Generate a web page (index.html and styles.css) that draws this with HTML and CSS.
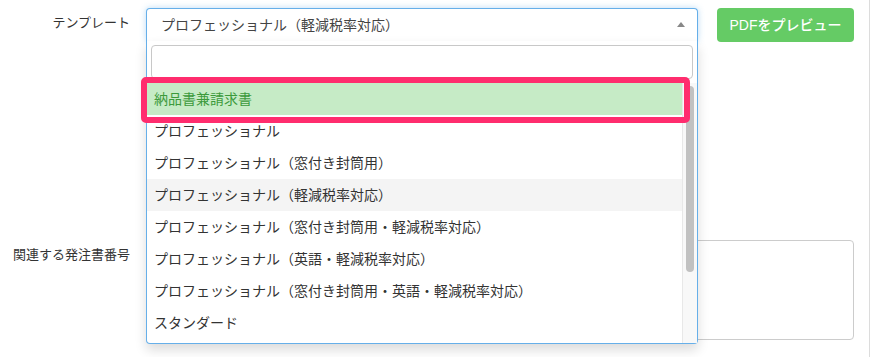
FILE: index.html
```html
<!DOCTYPE html>
<html lang="ja">
<head>
<meta charset="utf-8">
<title>テンプレート</title>
<link rel="stylesheet" href="styles.css">
</head>
<body>
<div class="page">
  <form class="form">
    <div class="row">
      <label class="label">テンプレート</label>
      <div class="field">
        <div class="select-wrap">
          <div class="select">
            <span class="select-text">プロフェッショナル（軽減税率対応）</span>
            <span class="arrow"></span>
          </div>
          <div class="dropdown">
            <div class="search"><input class="search-input" type="text"></div>
            <div class="results">
              <ul class="options">
                <li class="option selected">納品書兼請求書</li>
                <li class="option">プロフェッショナル</li>
                <li class="option">プロフェッショナル（窓付き封筒用）</li>
                <li class="option hover">プロフェッショナル（軽減税率対応）</li>
                <li class="option">プロフェッショナル（窓付き封筒用・軽減税率対応）</li>
                <li class="option">プロフェッショナル（英語・軽減税率対応）</li>
                <li class="option">プロフェッショナル（窓付き封筒用・英語・軽減税率対応）</li>
                <li class="option">スタンダード</li>
              </ul>
              <div class="scrollbar"><div class="thumb"></div></div>
            </div>
            <div class="callout"></div>
          </div>
        </div>
        <button class="btn" type="button">PDFをプレビュー</button>
      </div>
    </div>
    <div class="row row-po">
      <label class="label">関連する発注書番号</label>
      <div class="field">
        <textarea class="textarea"></textarea>
      </div>
    </div>
  </form>
</div>
</body>
</html>
```
FILE: styles.css
```css
html, body {
  margin: 0;
  padding: 0;
  background: #fff;
}

body {
  font-family: "Liberation Sans", "Noto Sans CJK JP", sans-serif;
  color: #333;
}

.page {
  width: 870px;
  height: 357px;
  box-sizing: border-box;
  padding-top: 8px;
  border-right: 1px solid #dcdcdc;
  overflow: hidden;
}

.form {
  margin: 0;
}

.row {
  display: grid;
  grid-template-columns: 130px 708px;
  column-gap: 16px;
  align-items: start;
}

.row-po {
  margin-top: 198px;
}

.label {
  text-align: right;
  font-size: 13px;
  line-height: 20px;
  padding-top: 5px;
  color: #333;
  white-space: nowrap;
}

.field {
  display: flex;
  align-items: flex-start;
  gap: 19px;
}

.select-wrap {
  position: relative;
  width: 552px;
  flex: none;
}

.select {
  height: 33px;
  box-sizing: border-box;
  border: 1px solid #66afe9;
  border-bottom: none;
  border-radius: 4px 4px 0 0;
  display: flex;
  align-items: center;
  justify-content: space-between;
  padding: 0 12px 0 14px;
  font-size: 14px;
  color: #444;
  box-shadow: 0 0 6px rgba(102, 175, 233, 0.45);
  background: #fff;
}

.select-text {
  line-height: 20px;
  white-space: nowrap;
}

.arrow {
  width: 0;
  height: 0;
  border-style: solid;
  border-width: 0 4px 5px 4px;
  border-color: transparent transparent #888 transparent;
  margin-top: -1px;
}

.dropdown {
  position: absolute;
  top: 33px;
  left: 0;
  width: 552px;
  box-sizing: border-box;
  background: #fff;
  border: 1px solid #66afe9;
  border-top: none;
  border-radius: 0 0 4px 4px;
  box-shadow: 0 6px 12px rgba(0, 0, 0, 0.14);
  z-index: 10;
}

.search {
  padding: 4px;
}

.search-input {
  display: block;
  width: 100%;
  height: 34px;
  box-sizing: border-box;
  border: 1px solid #c8c8c8;
  border-radius: 4px;
  margin: 0;
  padding: 0 6px;
  outline: none;
  background: #fff;
}

.results {
  display: flex;
  height: 260px;
  overflow: hidden;
}

.options {
  flex: 1;
  list-style: none;
  margin: 0;
  padding: 0;
  overflow: hidden;
}

.option {
  height: 32px;
  line-height: 32px;
  padding: 0 7px;
  font-size: 14px;
  color: #333;
  white-space: nowrap;
}

.option.selected {
  background: #c6ebc6;
  color: #3c9a3c;
}

.option.hover {
  background: #f4f4f4;
}

.scrollbar {
  flex: none;
  width: 15px;
  box-sizing: border-box;
  background: #f8f8f8;
  border-left: 1px solid #e8e8e8;
  padding: 3px 0 0 3px;
}

.thumb {
  width: 8px;
  height: 186px;
  border-radius: 4px;
  background: #c1c1c1;
}

.callout {
  position: absolute;
  left: -6px;
  top: 36px;
  width: 549px;
  height: 46px;
  box-sizing: border-box;
  border: 6px solid #ff2d6e;
  border-radius: 5px;
  pointer-events: none;
}

.btn {
  flex: none;
  width: 137px;
  height: 34px;
  border: none;
  border-radius: 4px;
  background: #65cb65;
  color: #fff;
  font-family: "Liberation Sans", "Noto Sans CJK JP", sans-serif;
  font-size: 14px;
  font-weight: 500;
  line-height: 20px;
  padding: 0;
  cursor: pointer;
}

.textarea {
  display: block;
  width: 708px;
  height: 100px;
  box-sizing: border-box;
  border: 1px solid #ccc;
  border-radius: 4px;
  resize: none;
  margin: 0;
}
```
